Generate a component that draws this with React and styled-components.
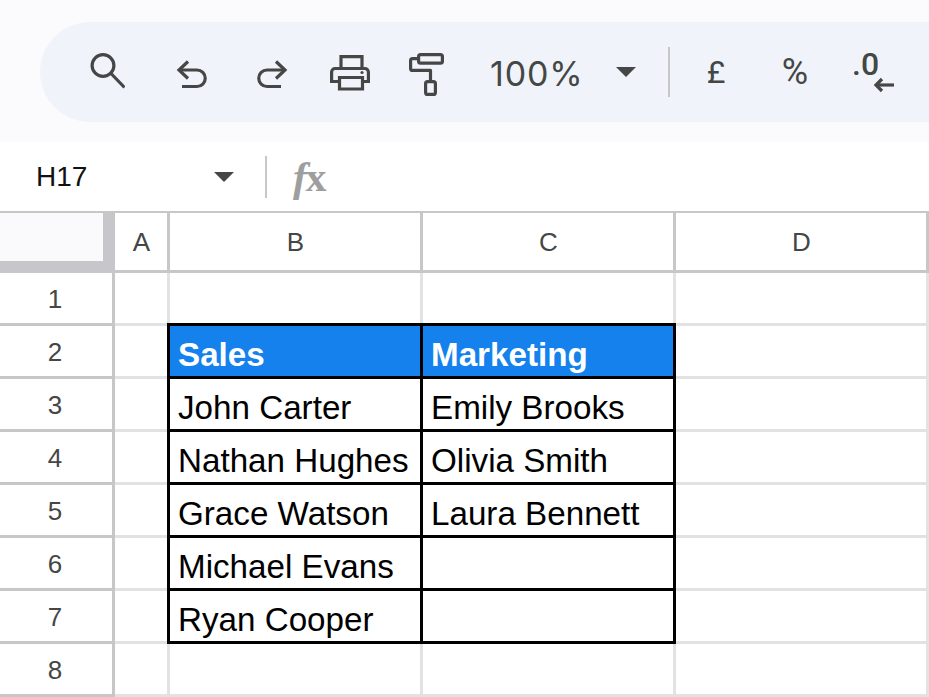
import React from 'react'
import styled, { createGlobalStyle } from 'styled-components'

const Global = createGlobalStyle`
  html, body {
    margin: 0;
    padding: 0;
    background: #fff;
    overflow: hidden;
  }
  body {
    font-family: "Liberation Sans", Arial, sans-serif;
  }
`

const Page = styled.div`
  width: 929px;
  height: 697px;
  overflow: hidden;
`

const ToolbarArea = styled.div`
  height: 142px;
  box-sizing: border-box;
  padding: 22px 0 20px 40px;
  background: #fbfbfe;
`

const Toolbar = styled.div`
  height: 100px;
  border-radius: 50px 0 0 50px;
  background: #f0f4fa;
  display: flex;
  align-items: center;
  padding-left: 47px;
  color: #444746;
`

const IconSlot = styled.div`
  width: ${props => props.$w}px;
  flex: none;
  display: flex;
  align-items: center;
  svg {
    display: block;
  }
`

const Zoom = styled.div`
  width: 126px;
  flex: none;
  padding-top: 3px;
  font-family: "Inter", sans-serif;
  font-size: 34px;
  letter-spacing: 0.8px;
  color: #444746;
`

const Caret = styled.div`
  width: 0;
  height: 0;
  flex: none;
  border-left: 10px solid transparent;
  border-right: 10px solid transparent;
  border-top: 10px solid #444746;
`

const Divider = styled.div`
  width: 2px;
  height: ${props => props.$h}px;
  flex: none;
  background: #c7c7c7;
  margin-left: ${props => props.$left}px;
`

const Glyph = styled.div`
  width: ${props => props.$w}px;
  flex: none;
  font-family: "Roboto", sans-serif;
  font-size: ${props => props.$size}px;
  font-weight: ${props => props.$weight};
  color: #444746;
  text-align: center;
`

const DecimalIcon = styled.div`
  position: relative;
  width: 48px;
  height: 48px;
  flex: none;
  margin-left: 24px;
`

const DecimalText = styled.span`
  position: absolute;
  left: 0;
  top: -2px;
  font-family: "Roboto", sans-serif;
  font-size: 32px;
  font-weight: 500;
  line-height: 36px;
  color: #444746;
`

const DecreaseArrow = styled.svg`
  position: absolute;
  left: 21px;
  top: 29px;
`

const FormulaBar = styled.div`
  height: 70px;
  box-sizing: border-box;
  display: flex;
  align-items: center;
  padding-left: 36px;
  background: #fff;
`

const CellName = styled.div`
  width: 178px;
  flex: none;
  font-size: 28px;
  color: #111;
`

const FxIcon = styled.div`
  margin-left: 26px;
  font-family: "Liberation Serif", serif;
  font-weight: 700;
  font-size: 42px;
  line-height: 1;
  color: #9e9e9e;
  letter-spacing: -1.5px;
`

const FxLetter = styled.span`
  font-style: italic;
`

const Sheet = styled.div`
  display: grid;
  grid-template-columns: 115px 55px 253px 253px 253px;
  grid-template-rows: 60px repeat(8, 53px);
  border-top: 2px solid #c7c7c7;
  margin-top: -1px;
`

const Corner = styled.div`
  box-sizing: border-box;
  background: #faf9fc;
  border-right: 12px solid #c7c6ca;
  border-bottom: 12px solid #c7c6ca;
`

const ColHead = styled.div`
  box-sizing: border-box;
  display: flex;
  align-items: center;
  justify-content: center;
  padding: 2px 0 0 1px;
  border-right: 3px solid #c7c7c7;
  border-bottom: 3px solid #c7c7c7;
  font-size: 26px;
  color: #444746;
`

const RowHead = styled.div`
  box-sizing: border-box;
  display: flex;
  align-items: center;
  justify-content: center;
  border-right: 3px solid #c7c7c7;
  border-bottom: 3px solid #c7c7c7;
  padding: 2px 2px 0 0;
  font-size: 26px;
  color: #444746;
`

const Cell = styled.div`
  position: relative;
  box-sizing: border-box;
  display: flex;
  align-items: center;
  padding: 7px 0 0 8px;
  border-right: 3px solid #e2e2e2;
  border-bottom: 3px solid #e2e2e2;
  background: ${props => props.$head ? '#1581ed' : '#fff'};
  color: ${props => props.$head ? '#fff' : '#000'};
  font-size: 33.2px;
  font-weight: ${props => props.$head ? 700 : 400};
  white-space: nowrap;

  ${props => props.$boxed && `
    &::after {
      content: '';
      position: absolute;
      inset: -3px;
      border: 3px solid #000;
    }
  `}
`

const Search = () => (
  <svg width="38" height="38" viewBox="0 0 38 38" fill="none" stroke="#444746" strokeWidth="3.2">
    <circle cx="16" cy="12.5" r="10.9" />
    <path d="M24 20.5 L37.5 34.5" />
  </svg>
)

const Undo = () => (
  <svg width="36" height="34" viewBox="0 0 36 34" fill="none" stroke="#444746" strokeWidth="3.2">
    <path d="M14 6.5 L5 15 L14 23.5" />
    <path d="M5 15 H23 a8.25 8.25 0 0 1 0 16.5 H8" />
  </svg>
)

const Redo = () => (
  <svg width="36" height="34" viewBox="0 0 36 34" fill="none" stroke="#444746" strokeWidth="3.2">
    <path d="M24 6.5 L33 15 L24 23.5" />
    <path d="M33 15 H15 a8.25 8.25 0 0 0 0 16.5 H29" />
  </svg>
)

const Print = () => (
  <svg width="40" height="38" viewBox="0 0 40 38" fill="none" stroke="#444746" strokeWidth="3.2">
    <path d="M11 15 V3.6 H32 V15" />
    <path d="M8 28.5 H1.6 V19 a3.5 3.5 0 0 1 3.5 -3.5 H34.9 a3.5 3.5 0 0 1 3.5 3.5 V28.5 H33" />
    <path d="M9.5 24.5 H32.5 V36 H9.5 Z" />
    <circle cx="32" cy="19.5" r="1.6" fill="#444746" stroke="none" />
  </svg>
)

const Paint = () => (
  <svg width="36" height="48" viewBox="0 0 36 48" fill="none" stroke="#444746" strokeWidth="3.2" strokeLinejoin="round">
    <rect x="9.6" y="6.6" width="23.8" height="8.6" rx="2" />
    <path d="M9.6 10.6 H3.6 a2 2 0 0 0 -2 2 V20.4 a2 2 0 0 0 2 2 H21.5 V33" />
    <rect x="16.6" y="33.6" width="9.8" height="12.8" rx="2" />
  </svg>
)

const columns = ['A', 'B', 'C', 'D']

const rows = [
  ['', '', ''],
  ['Sales', 'Marketing', ''],
  ['John Carter', 'Emily Brooks', ''],
  ['Nathan Hughes', 'Olivia Smith', ''],
  ['Grace Watson', 'Laura Bennett', ''],
  ['Michael Evans', '', ''],
  ['Ryan Cooper', '', ''],
  ['', '', ''],
]

export default function App() {
  return (
    <Page>
      <Global />
      <ToolbarArea>
        <Toolbar>
          <IconSlot $w={87}><Search /></IconSlot>
          <IconSlot $w={78}><Undo /></IconSlot>
          <IconSlot $w={78}><Redo /></IconSlot>
          <IconSlot $w={79}><Print /></IconSlot>
          <IconSlot $w={81}><Paint /></IconSlot>
          <Zoom>100%</Zoom>
          <Caret />
          <Divider $h={50} $left={32} />
          <Glyph $w={92} $size={32} $weight={400}>£</Glyph>
          <Glyph $w={66} $size={36} $weight={400}>%</Glyph>
          <DecimalIcon>
            <DecimalText>.0</DecimalText>
            <DecreaseArrow width="22" height="16" viewBox="0 0 22 16" fill="none" stroke="#444746" strokeWidth="3.2">
              <path d="M9 2 L3 8 L9 14" />
              <path d="M3 8 H21" />
            </DecreaseArrow>
          </DecimalIcon>
        </Toolbar>
      </ToolbarArea>
      <FormulaBar>
        <CellName>H17</CellName>
        <Caret />
        <Divider $h={42} $left={31} />
        <FxIcon><FxLetter>f</FxLetter>x</FxIcon>
      </FormulaBar>
      <Sheet>
        <Corner />
        {columns.map(c => <ColHead key={c}>{c}</ColHead>)}
        {rows.map((row, r) => (
          <React.Fragment key={r}>
            <RowHead>{r + 1}</RowHead>
            <Cell />
            {row.map((text, c) => {
              const inTable = r >= 1 && r <= 6 && c < 2
              return (
                <Cell key={c} $boxed={inTable} $head={r === 1 && c < 2}>
                  {text}
                </Cell>
              )
            })}
          </React.Fragment>
        ))}
      </Sheet>
    </Page>
  )
}
